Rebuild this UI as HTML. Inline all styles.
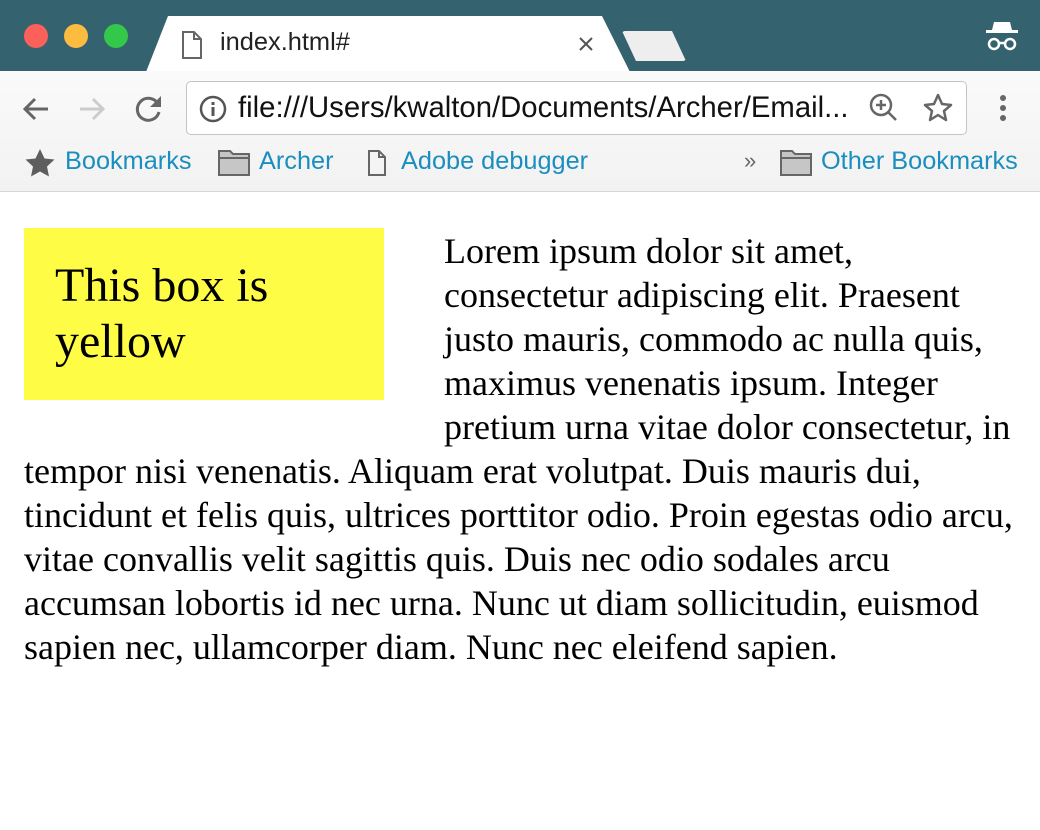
<!DOCTYPE html>
<html><head><meta charset="utf-8"><style>
*{margin:0;padding:0;box-sizing:border-box}
html,body{width:1040px;height:830px;overflow:hidden;background:#fff;position:relative;font-family:"Liberation Sans",sans-serif}
.abs{position:absolute}
.top{left:0;top:0;width:1040px;height:71px;background:#34626e}
.tab{left:146px;top:16px;width:484px;height:56px;background:#fff;clip-path:polygon(0 100%,22px 0,456px 0,484px 100%)}
.tb{left:0;top:71px;width:1040px;height:121px;background:linear-gradient(#fafafa,#f2f2f2);border-bottom:1px solid #d6d6d6}
.dot{width:24px;height:24px;border-radius:50%;top:24px}
.bm{color:#1a8fbf;font-size:25.3px;top:147px}
.url{left:186px;top:81px;width:781px;height:54px;background:#fff;border:1px solid #c4c4c4;border-radius:5px}
.l{position:absolute;left:24px;font-family:"Liberation Serif",serif;font-size:36px;line-height:44px;white-space:nowrap;color:#000}
</style></head><body>
<div class="abs top"></div>
<div class="abs dot" style="left:24px;background:#fc605b"></div>
<div class="abs dot" style="left:64px;background:#fdbc40"></div>
<div class="abs dot" style="left:104px;background:#34c84a"></div>
<div class="abs tab"></div>
<svg class="abs" style="left:180px;top:30px" width="24" height="30" viewBox="0 0 24 30"><path d="M3 2h11l7 7v19H3z M14 2v7h7" fill="none" stroke="#666" stroke-width="2"/></svg>
<div class="abs" style="left:220px;top:28px;font-size:25.4px;color:#222">index.html#</div>
<svg class="abs" style="left:578px;top:36px" width="16" height="16"><path d="M2 2L14 14M14 2L2 14" stroke="#555" stroke-width="2"/></svg>
<div class="abs" style="left:622px;top:31px;width:64px;height:30px;background:#eee;clip-path:polygon(0 0,50px 0,64px 100%,14px 100%);border-radius:3px"></div>
<svg class="abs" style="left:984px;top:18px" width="36" height="36" viewBox="0 0 36 36"><path d="M10 4h16l2 8H8z" fill="#fff"/><rect x="2" y="12" width="32" height="3" fill="#fff"/><circle cx="10" cy="26" r="5" fill="none" stroke="#fff" stroke-width="2.5"/><circle cx="26" cy="26" r="5" fill="none" stroke="#fff" stroke-width="2.5"/><path d="M15 25h6" stroke="#fff" stroke-width="2.5"/></svg>
<div class="abs tb"></div>
<svg class="abs" style="left:20px;top:94px" width="32" height="30" viewBox="0 0 32 30"><path d="M28 15H5M15 5L5 15l10 10" fill="none" stroke="#666" stroke-width="3"/></svg>
<svg class="abs" style="left:76px;top:94px" width="32" height="30" viewBox="0 0 32 30"><path d="M4 15h23M17 5l10 10-10 10" fill="none" stroke="#ccc" stroke-width="3"/></svg>
<svg class="abs" style="left:132px;top:92px" width="34" height="34" viewBox="0 0 34 34"><path d="M26 12A11 11 0 1 0 27 20" fill="none" stroke="#666" stroke-width="3"/><path d="M29 4v11H18z" fill="#666"/></svg>
<div class="abs url"></div>
<svg class="abs" style="left:198px;top:94px" width="30" height="30" viewBox="0 0 30 30"><circle cx="15" cy="15" r="12" fill="none" stroke="#555" stroke-width="2.5"/><rect x="13.5" y="13" width="3" height="9" fill="#555"/><rect x="13.5" y="8" width="3" height="3" fill="#555"/></svg>
<div class="abs" style="left:238px;top:91px;font-size:29.3px;color:#111">file:///Users/kwalton/Documents/Archer/Email...</div>
<svg class="abs" style="left:868px;top:92px" width="32" height="32" viewBox="0 0 32 32"><circle cx="13" cy="13" r="10" fill="none" stroke="#666" stroke-width="2.5"/><path d="M20 20l8 8M13 8v10M8 13h10" stroke="#666" stroke-width="2.5"/></svg>
<svg class="abs" style="left:922px;top:92px" width="32" height="32" viewBox="0 0 32 32"><path d="M16 3l4 9 9 1-7 6 2 9-8-5-8 5 2-9-7-6 9-1z" fill="none" stroke="#666" stroke-width="2.5" stroke-linejoin="round"/></svg>
<svg class="abs" style="left:996px;top:94px" width="14" height="30"><circle cx="7" cy="4" r="3" fill="#666"/><circle cx="7" cy="14" r="3" fill="#666"/><circle cx="7" cy="24" r="3" fill="#666"/></svg>
<svg class="abs" style="left:24px;top:148px" width="32" height="30" viewBox="0 0 32 30"><path d="M16 1l4.5 9.5 10 1-7.5 7 2 10-9-5-9 5 2-10-7.5-7 10-1z" fill="#5e5e5e"/></svg>
<div class="abs bm" style="left:65px">Bookmarks</div>
<svg class="abs" style="left:217px;top:149px" width="34" height="28" viewBox="0 0 34 28"><path d="M2 2h11l3 3h16v21H2z" fill="#c6c6c6" stroke="#666" stroke-width="2"/><path d="M2 9h30" stroke="#666" stroke-width="2"/></svg>
<div class="abs bm" style="left:259px">Archer</div>
<svg class="abs" style="left:367px;top:150px" width="20" height="26" viewBox="0 0 20 26"><path d="M2 1h10l6 6v18H2z M12 1v6h6" fill="none" stroke="#666" stroke-width="2"/></svg>
<div class="abs bm" style="left:401px">Adobe debugger</div>
<div class="abs" style="left:744px;top:148px;font-size:22px;color:#666">»</div>
<svg class="abs" style="left:779px;top:149px" width="34" height="28" viewBox="0 0 34 28"><path d="M2 2h11l3 3h16v21H2z" fill="#c6c6c6" stroke="#666" stroke-width="2"/><path d="M2 9h30" stroke="#666" stroke-width="2"/></svg>
<div class="abs bm" style="left:821px">Other Bookmarks</div>

<div class="abs" style="left:24px;top:228px;width:360px;height:172px;background:#fffc45"></div>
<div class="abs" style="left:55px;top:258px;font-family:'Liberation Serif',serif;font-size:48px;line-height:56px">This box is<br>yellow</div>

<div class="l" style="top:229px;left:444px">Lorem ipsum dolor sit amet,</div>
<div class="l" style="top:273px;left:444px">consectetur adipiscing elit. Praesent</div>
<div class="l" style="top:317px;left:444px">justo mauris, commodo ac nulla quis,</div>
<div class="l" style="top:361px;left:444px">maximus venenatis ipsum. Integer</div>
<div class="l" style="top:405px;left:444px">pretium urna vitae dolor consectetur, in</div>
<div class="l" style="top:449px">tempor nisi venenatis. Aliquam erat volutpat. Duis mauris dui,</div>
<div class="l" style="top:493px">tincidunt et felis quis, ultrices porttitor odio. Proin egestas odio arcu,</div>
<div class="l" style="top:537px">vitae convallis velit sagittis quis. Duis nec odio sodales arcu</div>
<div class="l" style="top:581px">accumsan lobortis id nec urna. Nunc ut diam sollicitudin, euismod</div>
<div class="l" style="top:625px">sapien nec, ullamcorper diam. Nunc nec eleifend sapien.</div>
</body></html>
